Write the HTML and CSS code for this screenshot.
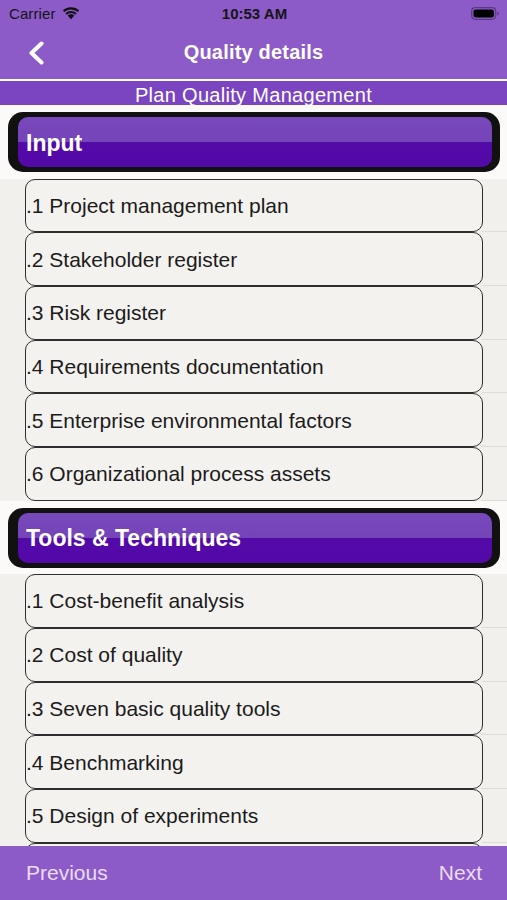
FILE: index.html
```html
<!DOCTYPE html>
<html>
<head>
<meta charset="utf-8">
<link rel="stylesheet" href="styles.css">
</head>
<body>
<div class="screen">
  <header class="topbar">
    <div class="status">
      <div class="status-left">
        <span class="carrier">Carrier</span>
        <svg class="wifi" width="18" height="14" viewBox="0 0 18 14">
          <path d="M9 13.2 L5.7 9.6 A4.8 4.8 0 0 1 12.3 9.6 Z" fill="#111"/>
          <path d="M3.4 7.3 A8 8 0 0 1 14.6 7.3 L13.2 8.8 A6 6 0 0 0 4.8 8.8 Z" fill="#111"/>
          <path d="M0.9 4.6 A11.6 11.6 0 0 1 17.1 4.6 L15.7 6.1 A9.6 9.6 0 0 0 2.3 6.1 Z" fill="#111"/>
        </svg>
      </div>
      <span class="clock">10:53 AM</span>
      <div class="status-right">
        <svg class="battery" width="29" height="13" viewBox="0 0 29 13">
          <rect x="0.7" y="0.7" width="24" height="11.6" rx="3.5" fill="none" stroke="#5a3a86" stroke-width="1.2"/>
          <rect x="2.5" y="2.5" width="20.4" height="8" rx="2" fill="#000"/>
          <path d="M26.3 4.5 Q28 5 28 6.5 Q28 8 26.3 8.5 Z" fill="#5a3a86"/>
        </svg>
      </div>
    </div>
    <nav class="navbar">
      <svg class="back" width="18" height="24" viewBox="0 0 18 24">
        <path d="M14.5 2.5 L4.5 12 L14.5 21.5" fill="none" stroke="#fff" stroke-width="4" stroke-linecap="round" stroke-linejoin="round"/>
      </svg>
      <span class="nav-title">Quality details</span>
    </nav>
  </header>
  <div class="divider"></div>
  <div class="subtitle">Plan Quality Management</div>

  <main class="list">
    <section class="section">
      <div class="sec-head"><div class="sec-box"><div class="sec-inner">Input</div></div></div>
      <div class="row"><div class="cell">.1 Project management plan</div></div>
      <div class="row"><div class="cell">.2 Stakeholder register</div></div>
      <div class="row"><div class="cell">.3 Risk register</div></div>
      <div class="row"><div class="cell">.4 Requirements documentation</div></div>
      <div class="row"><div class="cell">.5 Enterprise environmental factors</div></div>
      <div class="row"><div class="cell">.6 Organizational process assets</div></div>
    </section>
    <section class="section">
      <div class="sec-head"><div class="sec-box"><div class="sec-inner">Tools &amp; Techniques</div></div></div>
      <div class="row"><div class="cell">.1 Cost-benefit analysis</div></div>
      <div class="row"><div class="cell">.2 Cost of quality</div></div>
      <div class="row"><div class="cell">.3 Seven basic quality tools</div></div>
      <div class="row"><div class="cell">.4 Benchmarking</div></div>
      <div class="row"><div class="cell">.5 Design of experiments</div></div>
      <div class="row"><div class="cell"></div></div>
    </section>
  </main>

  <footer class="toolbar">
    <span class="tb-btn">Previous</span>
    <span class="tb-btn">Next</span>
  </footer>
</div>
</body>
</html>
```

FILE: styles.css
```css
* { box-sizing: border-box; }
html, body { margin: 0; padding: 0; }
body {
  width: 507px;
  height: 900px;
  overflow: hidden;
  font-family: "Liberation Sans", Arial, sans-serif;
  background: #f2f0ed;
}
.screen {
  height: 900px;
  display: flex;
  flex-direction: column;
}
.topbar {
  background: #8c5bc8;
  flex: none;
}
.status {
  height: 24.5px;
  display: flex;
  align-items: center;
  justify-content: space-between;
  padding: 3px 7px 0 9px;
}
.status-left {
  display: flex;
  align-items: center;
  gap: 6px;
  width: 120px;
}
.carrier {
  font-size: 15px;
  color: #151515;
  letter-spacing: 0.1px;
}
.wifi { margin-top: -2px; }
.clock {
  font-size: 15px;
  font-weight: 700;
  color: #151515;
}
.status-right {
  width: 120px;
  display: flex;
  justify-content: flex-end;
}
.navbar {
  height: 54px;
  display: flex;
  align-items: center;
  justify-content: center;
  position: relative;
}
.back {
  position: absolute;
  left: 27px;
  top: 16px;
}
.nav-title {
  color: #fff;
  font-size: 20px;
  font-weight: 700;
  letter-spacing: 0.2px;
  margin-top: 1px;
}
.divider {
  height: 2px;
  background: #ffffff;
  flex: none;
}
.subtitle {
  flex: none;
  height: 24.5px;
  background: #7b44c0;
  color: #fff;
  font-size: 20px;
  text-align: center;
  line-height: 25px;
  padding-top: 2px;
  letter-spacing: 0.3px;
  overflow: hidden;
}
.list {
  flex: 1;
  overflow: hidden;
}
.sec-head {
  height: 73.5px;
  background: #fbfaf9;
  padding: 7px 7px 6.5px 8px;
}
.sec-box {
  height: 100%;
  background: #111;
  border-radius: 15px;
  padding: 5px 8px 5px 10px;
}
.sec-inner {
  height: 100%;
  border-radius: 10px;
  background: linear-gradient(to bottom, #7849bb 0%, #7444b8 50%, #4a1498 50%, #540aa9 53%, #5309a8 100%);
  color: #fff;
  font-weight: 700;
  font-size: 23px;
  display: flex;
  align-items: center;
  padding-left: 8px;
  padding-top: 2px;
}
.row {
  height: 53.7px;
  position: relative;
  background: #f2f0ed;
}
.row::after {
  content: "";
  position: absolute;
  left: 482px;
  right: 0;
  bottom: 0;
  height: 1px;
  background: #dedcd9;
}
.cell {
  height: 100%;
  margin-left: 25px;
  width: 458px;
  background: #f4f2ef;
  border: 1.5px solid #2e2e2e;
  border-radius: 10px;
  display: flex;
  align-items: center;
  font-size: 21px;
  color: #1b1b1b;
  padding-left: 0;
  padding-top: 1px;
}
.toolbar {
  flex: none;
  height: 54px;
  background: #8c5bc8;
  display: flex;
  align-items: center;
  justify-content: space-between;
  padding: 0 25px 0 26px;
}
.tb-btn {
  color: #eadcfa;
  font-size: 21px;
}
```
